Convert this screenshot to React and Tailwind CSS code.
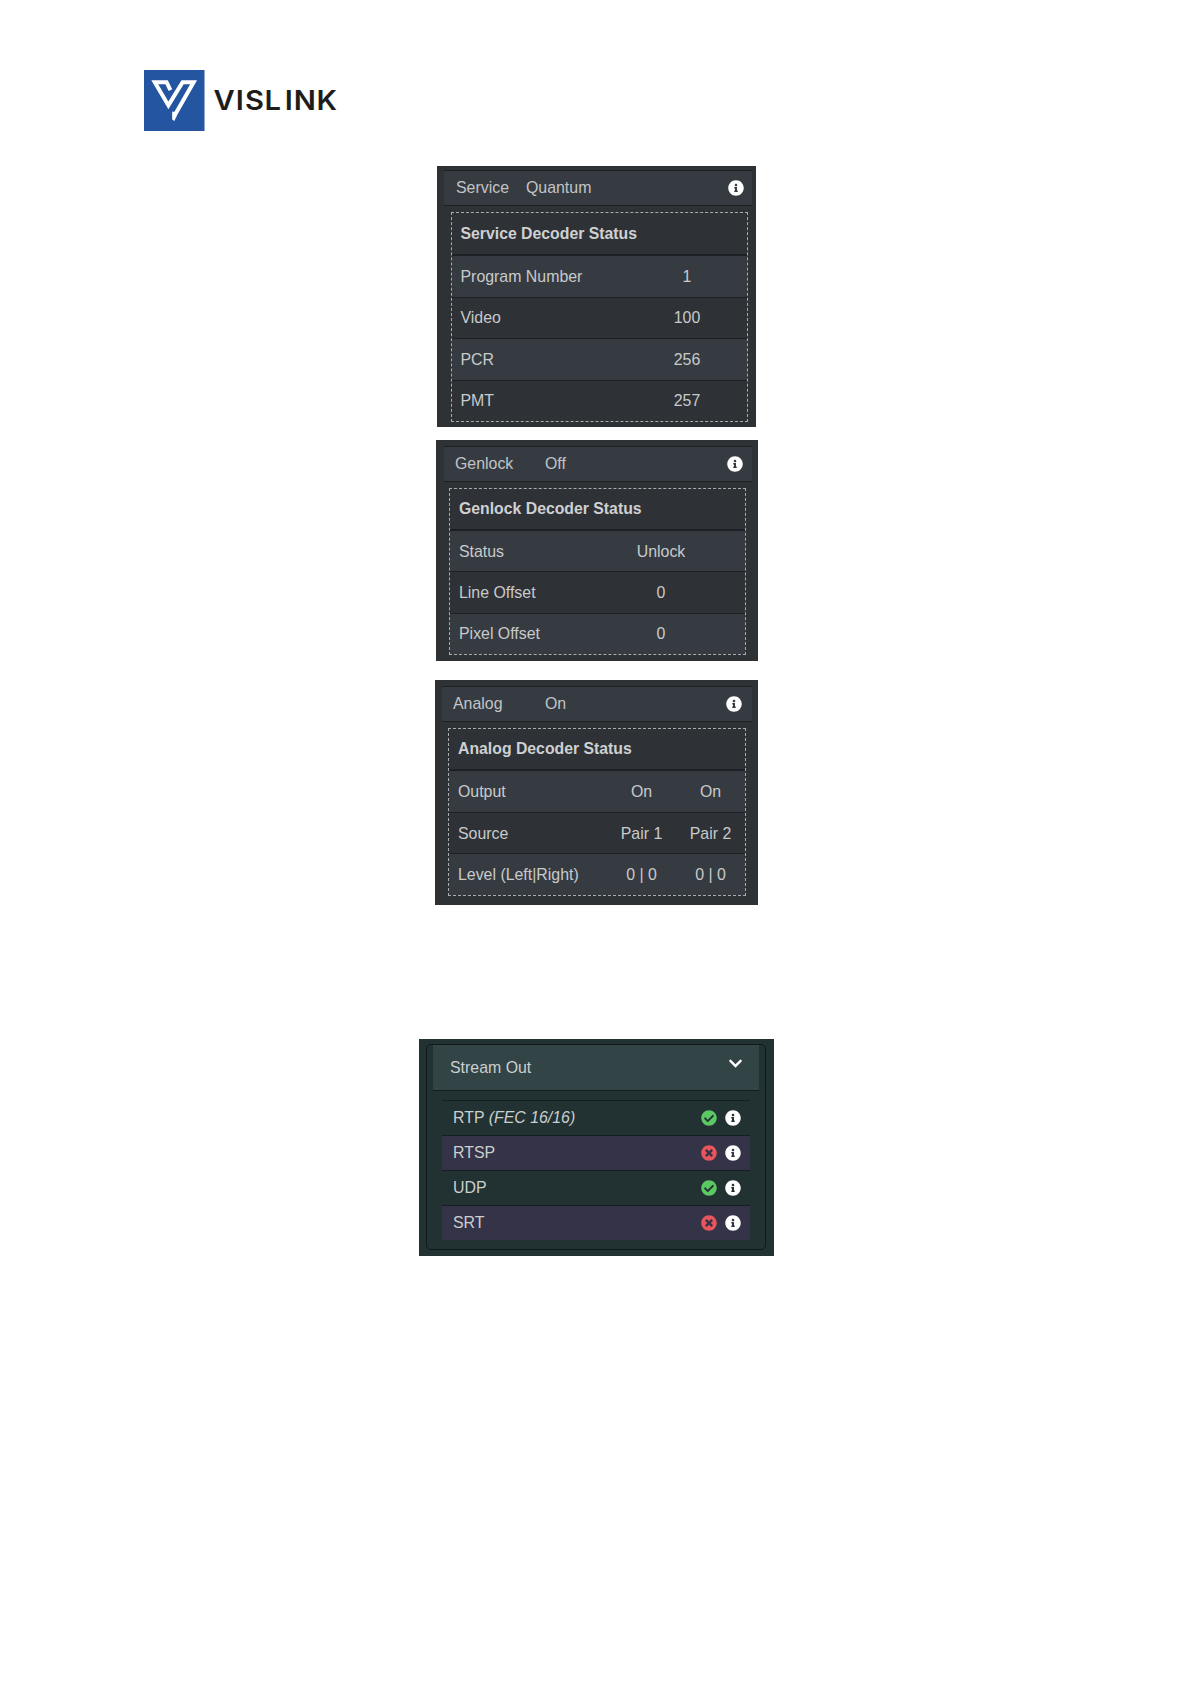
import React from "react";
import { FaInfoCircle, FaCheckCircle, FaTimesCircle, FaChevronDown } from "react-icons/fa";

function Logo() {
  return (
    <div className="ml-[144px] flex h-[61px] items-center">
      <svg width="61" height="61" viewBox="0 0 61 61" aria-hidden="true">
        <rect width="60.5" height="61" fill="#2455a0" />
        <path
          d="M26.4 20.2L22.6 12.2H10.8L24.4 35.4L38.6 12.2H49.6L30 46.4"
          fill="none"
          stroke="#fff"
          strokeWidth="4"
        />
        <path d="M28.2 41.5V49.5L30.4 51L32.6 46L31 42Z" fill="#fff" />
      </svg>
      <svg width="132" height="44" viewBox="0 0 132 44" className="ml-[9px] overflow-visible">
        <text
          transform="scale(1.1 1)"
          x="-0.4 19.7 28.2 46 64.4 72.5 93.2"
          y="31.5"
          fontFamily="Inter, sans-serif"
          fontWeight="600"
          fontSize="26.5"
          fill="#1d1d1b"
        >
          VISLINK
        </text>
      </svg>
    </div>
  );
}

function PanelHeader({ label, value, className, labelClass }) {
  return (
    <div
      className={`flex h-[36px] items-center border-y border-[#1c2025] bg-[#363b41] text-[#c2c4c6] ${className}`}
    >
      <span className={labelClass}>{label}</span>
      <span>{value}</span>
      <FaInfoCircle className="ml-auto size-4 text-white" />
    </div>
  );
}

function StatusTable({ title, rows, className, titleClass, padClass, cellClass }) {
  return (
    <div className={`flex flex-col border border-dashed border-[#a9abad] ${className}`}>
      <div
        className={`flex shrink-0 items-center border-b-2 border-[#1d2126] bg-[#2e3136] text-[15.8px] font-bold text-[#cfd0d1] ${titleClass} ${padClass}`}
      >
        {title}
      </div>
      <div className="flex grow flex-col divide-y divide-[#1d2126]">
        {rows.map(([name, ...values], i) => (
          <div
            key={name}
            className={`flex flex-1 items-center pt-px ${padClass} ${i % 2 ? "bg-[#2e3136]" : "bg-[#363b41]"}`}
          >
            <span className="grow">{name}</span>
            {values.map((v, k) => (
              <span key={k} className={`text-center ${cellClass}`}>
                {v}
              </span>
            ))}
          </div>
        ))}
      </div>
    </div>
  );
}

const streams = [
  { name: "RTP", note: "(FEC 16/16)", ok: true },
  { name: "RTSP", ok: false },
  { name: "UDP", ok: true },
  { name: "SRT", ok: false },
];

function StreamOut() {
  return (
    <div className="ml-[419px] mt-[134px] h-[217px] w-[355px] bg-[#223131] pl-[7px] pt-[5px] text-[#cbcfcf]">
      <div className="h-[206px] w-[340px] rounded-[5px] border border-[#0f1719] pl-[6px]">
        <div className="flex h-[46px] w-[326px] items-center border-b border-[#141e20] bg-[#324446] pl-[17px] pr-[16px]">
          <span>Stream Out</span>
          <FaChevronDown className="mb-[8px] ml-auto size-[15px] text-white" />
        </div>
        <div className="ml-[9px] mt-[9px] w-[308px]">
          {streams.map((s) => (
            <div
              key={s.name}
              className={`flex h-[35px] items-center border-t border-[#141e20] pl-[11px] pr-[9px] ${s.ok ? "bg-[#223131]" : "bg-[#353347]"}`}
            >
              <span>
                {s.name} {s.note && <em>{s.note}</em>}
              </span>
              {s.ok ? (
                <FaCheckCircle className="ml-auto size-4 text-[#5cc863]" />
              ) : (
                <FaTimesCircle className="ml-auto size-4 text-[#e8555a]" />
              )}
              <FaInfoCircle className="ml-2 size-4 text-white" />
            </div>
          ))}
        </div>
      </div>
    </div>
  );
}

export default function App() {
  return (
    <main className="h-[1684px] w-[1190px] overflow-hidden bg-white pt-[70px] font-['Liberation_Sans',Arial,sans-serif] text-[15.9px] leading-none text-[#c8cacb]">
      <Logo />

      <section className="ml-[437px] mt-[35px] h-[261px] w-[319px] bg-[#2e3235] pt-[4px]">
        <PanelHeader
          label="Service"
          value="Quantum"
          className="ml-[7px] w-[308px] pl-[12px] pr-[8px]"
          labelClass="w-[70px]"
        />
        <StatusTable
          title="Service Decoder Status"
          rows={[
            ["Program Number", "1"],
            ["Video", "100"],
            ["PCR", "256"],
            ["PMT", "257"],
          ]}
          className="ml-[14px] mt-[6px] h-[210px] w-[297px]"
          titleClass="h-[43px]"
          padClass="pl-[8.5px]"
          cellClass="w-[120px]"
        />
      </section>

      <section className="ml-[436px] mt-[13px] h-[221px] w-[322px] bg-[#2e3235] pt-[6px]">
        <PanelHeader
          label="Genlock"
          value="Off"
          className="ml-[8px] w-[308px] pl-[11px] pr-[9px]"
          labelClass="w-[90px]"
        />
        <StatusTable
          title="Genlock Decoder Status"
          rows={[
            ["Status", "Unlock"],
            ["Line Offset", "0"],
            ["Pixel Offset", "0"],
          ]}
          className="ml-[13px] mt-[6px] h-[167px] w-[297px]"
          titleClass="h-[42px]"
          padClass="pl-[9px]"
          cellClass="w-[168px]"
        />
      </section>

      <section className="ml-[435px] mt-[19px] h-[225px] w-[323px] bg-[#2e3235] pt-[6px]">
        <PanelHeader
          label="Analog"
          value="On"
          className="ml-[7px] w-[310px] pl-[11px] pr-[10px]"
          labelClass="w-[92px]"
        />
        <StatusTable
          title="Analog Decoder Status"
          rows={[
            ["Output", "On", "On"],
            ["Source", "Pair 1", "Pair 2"],
            ["Level (Left|Right)", "0 | 0", "0 | 0"],
          ]}
          className="ml-[13px] mt-[6px] h-[168px] w-[298px]"
          titleClass="h-[42px]"
          padClass="pl-[9px]"
          cellClass="w-[69px]"
        />
      </section>

      <StreamOut />
    </main>
  );
}
